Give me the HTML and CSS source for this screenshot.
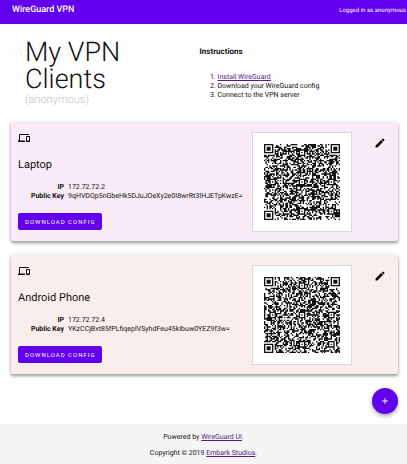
FILE: index.html
```html
<!DOCTYPE html>
<html lang="en">
<head>
<meta charset="utf-8">
<meta name="viewport" content="width=device-width, initial-scale=1">
<title>WireGuard VPN</title>
<link rel="stylesheet" href="styles.css">
</head>
<body>
<header class="topbar">
  <span class="brand">WireGuard VPN</span>
  <span class="user">Logged in as anonymous</span>
</header>
<main class="content">
  <section class="intro">
    <h1 class="title">My VPN Clients <small class="owner">(anonymous)</small></h1>
    <div class="instructions">
      <h2 class="subtitle">Instructions</h2>
      <ol class="steps">
        <li><a href="#install">Install WireGuard</a></li>
        <li>Download your WireGuard config</li>
        <li>Connect to the VPN server</li>
      </ol>
    </div>
  </section>

  <article class="card card-pink">
    <div class="details">
      <svg class="devices" viewBox="0 0 24 24" aria-hidden="true"><path d="M4 6h18V4H4c-1.1 0-2 .9-2 2v11H0v3h14v-3H4V6zm19 2h-6c-.55 0-1 .45-1 1v10c0 .55.45 1 1 1h6c.55 0 1-.45 1-1V9c0-.55-.45-1-1-1zm-1 9h-4v-7h4v7z"/></svg>
      <h3 class="name">Laptop</h3>
      <dl class="facts">
        <dt>IP</dt><dd>172.72.72.2</dd>
        <dt>Public Key</dt><dd>9qHVDQp5nGbeHk5DJuJOeXy2e0I8wrRt3IHJETpKwzE=</dd>
      </dl>
      <button class="download" type="button">Download Config</button>
    </div>
    <div class="qr"><svg viewBox="0 0 57 57" role="img" aria-label="QR code" data-seed="7291"></svg></div>
    <button class="edit" type="button" aria-label="Edit"><svg viewBox="0 0 24 24" aria-hidden="true"><path d="M3 17.25V21h3.75L17.81 9.94l-3.75-3.75L3 17.25zM20.71 7.04a1 1 0 0 0 0-1.41l-2.34-2.34a1 1 0 0 0-1.41 0l-1.83 1.83 3.75 3.75 1.83-1.83z"/></svg></button>
  </article>

  <article class="card card-peach">
    <div class="details">
      <svg class="devices" viewBox="0 0 24 24" aria-hidden="true"><path d="M4 6h18V4H4c-1.1 0-2 .9-2 2v11H0v3h14v-3H4V6zm19 2h-6c-.55 0-1 .45-1 1v10c0 .55.45 1 1 1h6c.55 0 1-.45 1-1V9c0-.55-.45-1-1-1zm-1 9h-4v-7h4v7z"/></svg>
      <h3 class="name">Android Phone</h3>
      <dl class="facts">
        <dt>IP</dt><dd>172.72.72.4</dd>
        <dt>Public Key</dt><dd>YKzCCjBxt85fPLfiqeplVSyhdFeu45kIbuw0YEZ9f3w=</dd>
      </dl>
      <button class="download" type="button">Download Config</button>
    </div>
    <div class="qr"><svg viewBox="0 0 57 57" role="img" aria-label="QR code" data-seed="48113"></svg></div>
    <button class="edit" type="button" aria-label="Edit"><svg viewBox="0 0 24 24" aria-hidden="true"><path d="M3 17.25V21h3.75L17.81 9.94l-3.75-3.75L3 17.25zM20.71 7.04a1 1 0 0 0 0-1.41l-2.34-2.34a1 1 0 0 0-1.41 0l-1.83 1.83 3.75 3.75 1.83-1.83z"/></svg></button>
  </article>

  <button class="add" type="button" aria-label="Add client"><svg viewBox="0 0 24 24" aria-hidden="true"><path d="M19 13h-6v6h-2v-6H5v-2h6V5h2v6h6v2z"/></svg></button>
</main>
<footer class="footer">
  <p>Powered by <a href="#ui">WireGuard UI</a>.</p>
  <p>Copyright © 2019 <a href="#embark">Embark Studios</a>.</p>
</footer>
<script src="qr.js"></script>
</body>
</html>
```
FILE: styles.css
```css
* {
  box-sizing: border-box;
}

body {
  display: flex;
  flex-direction: column;
  min-height: 100vh;
  margin: 0;
  background: #fefefe;
  color: #111;
  font: 7px/9px Roboto, sans-serif;
  text-rendering: geometricPrecision;
}

a {
  color: #551a8b;
}

button {
  border: 0;
  font-family: inherit;
  cursor: pointer;
}

svg {
  display: block;
  fill: currentColor;
}

.topbar {
  display: flex;
  align-items: center;
  justify-content: space-between;
  height: 24px;
  padding: 0 1px 4px 12px;
  background: #6200ee;
  color: #fff;
}

.brand {
  font-size: 9px;
  font-weight: 500;
}

.user {
  font-size: 6px;
}

.content {
  display: flex;
  flex: 1;
  flex-direction: column;
  gap: 14px;
  padding: 15px 9px 9px 11px;
}

.intro {
  display: grid;
  grid-template-columns: 1fr 1fr;
  padding: 0 24px 2px 14px;
}

.title {
  max-width: 120px;
  margin: 0;
  font-size: 27px;
  font-weight: 300;
  line-height: 27px;
}

.owner {
  display: block;
  color: #c4c4c4;
  font-size: 11px;
  line-height: 13px;
}

.subtitle {
  margin: 8px 0 17px;
  font-size: 8px;
  font-weight: 700;
  line-height: 9px;
}

.steps {
  margin: 0;
  padding-left: 18px;
}

.card {
  display: grid;
  grid-template-columns: minmax(0, 1fr) 100px 39px;
  align-items: start;
  padding: 10px 7px 9px;
  border-radius: 2px;
  box-shadow: 0 2px 3px rgba(0, 0, 0, 0.32), 0 1px 5px rgba(0, 0, 0, 0.14);
}

.card-pink {
  background: #f8eaf6;
}

.card-peach {
  background: #f8efec;
}

.devices {
  width: 12px;
  height: 12px;
}

.name {
  margin: 13px 0 11px;
  font-size: 11px;
  font-weight: 400;
  line-height: 15px;
}

.facts {
  display: grid;
  grid-template-columns: 46px 1fr;
  column-gap: 4px;
  margin: 0 0 12px;
}

.facts dt {
  font-weight: 700;
  text-align: right;
}

.facts dd {
  margin: 0;
}

.download {
  display: block;
  height: 17px;
  padding: 0 7px;
  border-radius: 2px;
  background: #6200ee;
  color: #fff;
  font-size: 6px;
  font-weight: 400;
  letter-spacing: 1px;
  text-transform: uppercase;
}

.qr {
  padding: 11px;
  border: 1px solid #ddd5dc;
  background: #fff;
}

.qr svg {
  width: 100%;
}

.edit {
  justify-self: end;
  margin: 5px 5px 0 0;
  padding: 0;
  background: none;
  color: #000;
}

.edit svg {
  width: 12px;
  height: 12px;
}

.add {
  display: grid;
  place-items: center;
  align-self: flex-end;
  width: 26px;
  height: 26px;
  padding: 0;
  border-radius: 50%;
  background: #6200ee;
  box-shadow: 0 2px 4px rgba(0, 0, 0, 0.35);
  color: #fff;
}

.add svg {
  width: 10px;
  height: 10px;
}

.footer {
  display: flex;
  flex-direction: column;
  gap: 7px;
  padding: 9px 0 6px;
  background: #f5f5f5;
  text-align: center;
}

.footer p {
  margin: 0;
}
```
FILE: qr.js
```js
// Draws a 57-module code: finder, alignment and timing marks over seeded data.
const SIZE = 57;

function marker(x, y, cx, cy, radius) {
  const d = Math.max(Math.abs(x - cx), Math.abs(y - cy));
  if (d > radius) return null;
  return radius === 4 ? d !== 2 && d !== 4 : d !== 1;
}

document.querySelectorAll('.qr svg').forEach((svg) => {
  let seed = Number(svg.dataset.seed);
  const next = () => {
    seed = (seed * 48271) % 2147483647;
    return seed / 2147483647;
  };
  const finders = [[3, 3], [53, 3], [3, 53]];
  const aligns = [[28, 6], [6, 28], [28, 28], [50, 28], [28, 50], [50, 50]];
  let d = '';
  for (let y = 0; y < SIZE; y++) {
    for (let x = 0; x < SIZE; x++) {
      let dark = next() < 0.53;
      if (x === 6) dark = y % 2 === 0;
      if (y === 6) dark = x % 2 === 0;
      for (const [cx, cy] of finders) dark = marker(x, y, cx, cy, 4) ?? dark;
      for (const [cx, cy] of aligns) dark = marker(x, y, cx, cy, 2) ?? dark;
      if (dark) d += `M${x} ${y}h1v1h-1z`;
    }
  }
  const path = document.createElementNS('http://www.w3.org/2000/svg', 'path');
  path.setAttribute('d', d);
  svg.append(path);
});
```
